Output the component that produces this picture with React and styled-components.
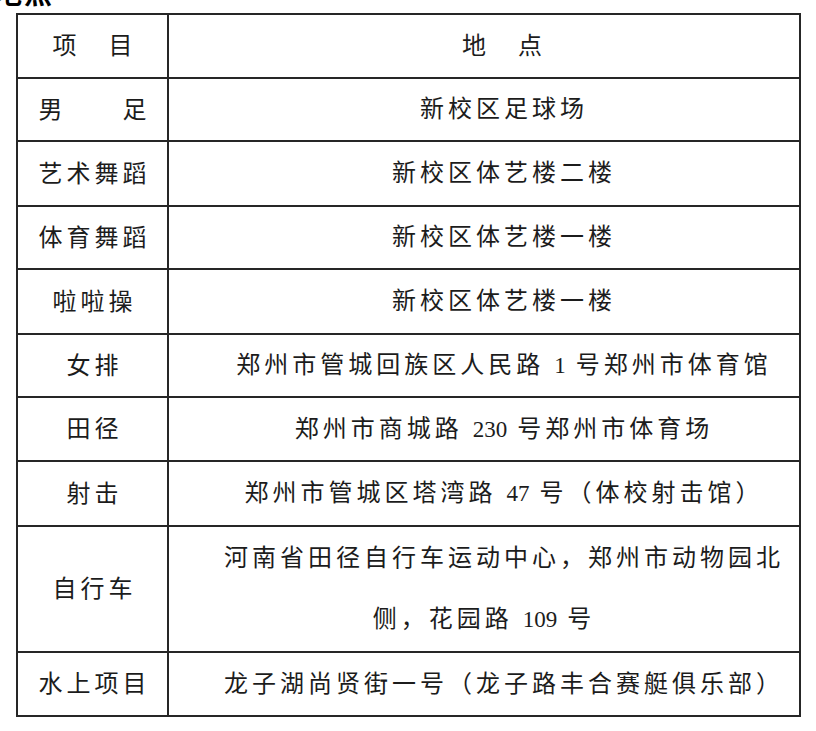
import React from 'react'
import styled, { createGlobalStyle } from 'styled-components'

const GlobalStyle = createGlobalStyle`
  html, body {
    margin: 0;
    padding: 0;
    background: #ffffff;
  }
  body {
    width: 816px;
    height: 731px;
    overflow: hidden;
    font-family: 'Liberation Serif', 'Noto Sans CJK SC', serif;
    color: #1c1c1c;
  }
`

const rows = [
  { item: '项　目', place: ['地　点'], h: 64 },
  { item: '男　　足', place: ['新校区足球场'], h: 63 },
  { item: '艺术舞蹈', place: ['新校区体艺楼二楼'], h: 65 },
  { item: '体育舞蹈', place: ['新校区体艺楼一楼'], h: 62 },
  { item: '啦啦操', place: ['新校区体艺楼一楼'], h: 65 },
  { item: '女排', place: ['郑州市管城回族区人民路 1 号郑州市体育馆'], h: 63 },
  { item: '田径', place: ['郑州市商城路 230 号郑州市体育场'], h: 64 },
  { item: '射击', place: ['郑州市管城区塔湾路 47 号（体校射击馆）'], h: 65 },
  {
    item: '自行车',
    place: ['河南省田径自行车运动中心，郑州市动物园北', '侧，花园路 109 号'],
    h: 126
  },
  { item: '水上项目', place: ['龙子湖尚贤街一号（龙子路丰合赛艇俱乐部）'], h: 64 }
]

// numbers are set tighter than the chinese text
const renderLine = text =>
  text.split(/(\d+)/).map((part, k) =>
    /^\d+$/.test(part) ? <Num key={k}>{part}</Num> : part
  )

const App = () => {
  return (
    <Page>
      <GlobalStyle />
      <Heading>
        <span>地点</span>
      </Heading>
      <Table>
        <colgroup>
          <col style={{ width: 151 }} />
          <col />
        </colgroup>
        <tbody>
          {rows.map((row, i) => (
            <Row key={i} $h={row.h}>
              <ItemCell>{row.item}</ItemCell>
              <PlaceCell>
                {row.place.map((line, j) => (
                  <Line key={j} $indent={row.place.length > 1 && j > 0 ? 0 : 40}>
                    {renderLine(line)}
                  </Line>
                ))}
              </PlaceCell>
            </Row>
          ))}
        </tbody>
      </Table>
    </Page>
  )
}

export default App

const Page = styled.div`
  width: 816px;
  height: 731px;
  display: flex;
  flex-direction: column;
`

const Heading = styled.div`
  height: 13px;
  overflow: hidden;
  span {
    display: block;
    margin: -22px 0 0 -6px;
    font-family: 'Noto Sans CJK SC', sans-serif;
    font-weight: 700;
    font-size: 28px;
    line-height: 28px;
    letter-spacing: 2px;
    color: #000;
  }
`

const Table = styled.table`
  margin-left: 16px;
  width: 785px;
  border-collapse: collapse;
  table-layout: fixed;
  td {
    border: 2px solid #262626;
    padding: 0;
    vertical-align: middle;
    text-align: center;
    font-size: 24px;
    letter-spacing: 4px;
    white-space: nowrap;
  }
`

const Row = styled.tr`
  height: ${p => p.$h}px;
`

const ItemCell = styled.td`
  line-height: 30px;
  padding-left: 4px !important;
`

const PlaceCell = styled.td`
  line-height: 61px;
`

const Line = styled.div`
  padding-left: ${p => p.$indent}px;
`

const Num = styled.span`
  letter-spacing: 0;
  font-size: 23px;
`
